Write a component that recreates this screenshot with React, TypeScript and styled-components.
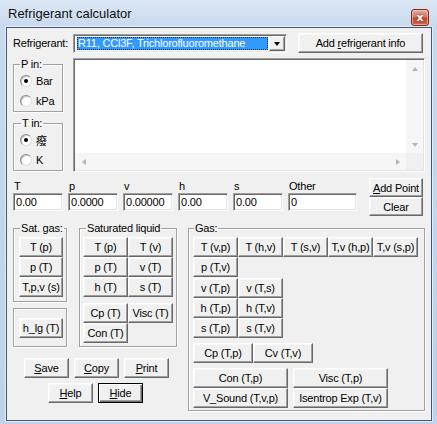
import React from 'react';
import styled, { createGlobalStyle, css } from 'styled-components';

const GlobalStyle = createGlobalStyle`
  html, body { margin: 0; padding: 0; background: #c4d5eb; }
  body { font-family: "Liberation Sans", Arial, sans-serif; }
  * { box-sizing: border-box; }
`;

const Window = styled.div`
  width: 437px;
  height: 424px;
  background: linear-gradient(180deg, #dbe7f5 0px, #c8d9ee 27px, #bfd2ea 100%);
  display: flex;
  flex-direction: column;
  font: 11px "Liberation Sans", Arial, sans-serif;
  letter-spacing: -0.2px;
  color: #000;
  overflow: hidden;
`;

const TitleBar = styled.div`
  height: 27px;
  flex: none;
  display: flex;
  align-items: flex-start;
  justify-content: space-between;
  padding: 0 8px;
`;

const Title = styled.div`
  font-size: 13px;
  letter-spacing: 0;
  line-height: 15px;
  margin-top: 6px;
  color: #111;
`;

const CloseButton = styled.div`
  margin-top: 9px;
  width: 18px;
  height: 17px;
  border-radius: 3px;
  border: 1px solid #7d2b22;
  background: linear-gradient(180deg, #e8a999 0%, #d6776a 45%, #c3462f 55%, #cf6a4f 100%);
  box-shadow: inset 0 0 0 1px rgba(255, 220, 210, 0.5);
  color: #fff;
  font: bold 11px "DejaVu Sans", sans-serif;
  display: flex;
  align-items: center;
  justify-content: center;
  text-shadow: 0 0 2px #6a1a10;
`;

const Client = styled.div`
  margin: 0 5px 0 6px;
  height: 394px;
  flex: none;
  border: 1px solid #46576d;
  box-shadow: 0 0 0 1px rgba(240, 246, 252, 0.7);
  background: #f0f0f0;
  padding: 5px 6px 0 6px;
  display: flex;
  flex-direction: column;
`;

const Row = styled.div<{ $top?: number; $height?: number; $gap?: number; $indent?: number }>`
  display: flex;
  align-items: flex-start;
  margin-top: ${p => p.$top ?? 0}px;
  ${p => p.$height !== undefined && css`height: ${p.$height}px;`}
  gap: ${p => p.$gap ?? 0}px;
  padding-left: ${p => p.$indent ?? 0}px;
`;

const Label = styled.span<{ $w?: number }>`
  width: ${p => p.$w ?? 60}px;
  line-height: 20px;
  white-space: nowrap;
`;

const Combo = styled.div`
  width: 214px;
  height: 19px;
  margin-top: 1px;
  margin-right: 11px;
  border: 1px solid;
  border-color: #a0a0a0 #fff #fff #a0a0a0;
  box-shadow: inset 1px 1px 0 #696969, inset -1px -1px 0 #e3e3e3;
  background: #fff;
  padding: 2px 2px 2px 3px;
  display: flex;
  align-items: stretch;
`;

const ComboSelection = styled.div`
  flex: 1;
  background: #3399ff;
  color: #fff;
  outline: 1px dotted #0b2a6e;
  outline-offset: -1px;
  padding-left: 1px;
  line-height: 13px;
  white-space: nowrap;
  overflow: hidden;
  margin-right: 1px;
`;

const DropButton = styled.div`
  width: 16px;
  margin: -1px -1px -1px 0;
  background: #f0f0f0;
  border: 1px solid;
  border-color: #fff #696969 #696969 #fff;
  box-shadow: inset -1px -1px 0 #a0a0a0;
  display: flex;
  align-items: center;
  justify-content: center;
`;

const TriangleDown = styled.span<{ $color?: string; $size?: number }>`
  width: 0;
  height: 0;
  border-left: ${p => p.$size ?? 3.5}px solid transparent;
  border-right: ${p => p.$size ?? 3.5}px solid transparent;
  border-top: ${p => (p.$size ?? 3.5) + 0.5}px solid ${p => p.$color ?? '#000'};
`;

const TriangleUp = styled.span<{ $color?: string }>`
  width: 0;
  height: 0;
  border-left: 3.5px solid transparent;
  border-right: 3.5px solid transparent;
  border-bottom: 4px solid ${p => p.$color ?? '#000'};
`;

const TriangleLeft = styled.span<{ $color?: string }>`
  width: 0;
  height: 0;
  border-top: 3.5px solid transparent;
  border-bottom: 3.5px solid transparent;
  border-right: 4px solid ${p => p.$color ?? '#000'};
`;

const TriangleRight = styled.span<{ $color?: string }>`
  width: 0;
  height: 0;
  border-top: 3.5px solid transparent;
  border-bottom: 3.5px solid transparent;
  border-left: 4px solid ${p => p.$color ?? '#000'};
`;

const Btn = styled.button<{ $w?: number; $h?: number; $default?: boolean }>`
  width: ${p => p.$w ?? 45}px;
  height: ${p => p.$h ?? 20}px;
  flex: none;
  margin: 0;
  padding: 0;
  font: inherit;
  letter-spacing: inherit;
  color: #000;
  background: #f0f0f0;
  border: 1px solid;
  border-color: #fff #696969 #696969 #fff;
  box-shadow: inset -1px -1px 0 #a0a0a0, inset 1px 1px 0 #f8f8f8;
  display: flex;
  align-items: center;
  justify-content: center;
  white-space: nowrap;
  ${p =>
    p.$default &&
    css`
      border: 1px solid #000;
      box-shadow: inset 1px 1px 0 #fff, inset -1px -1px 0 #696969, inset -2px -2px 0 #a0a0a0;
    `}
`;

const U = styled.span`
  text-decoration: underline;
  text-underline-offset: 1px;
`;

const Column = styled.div<{ $w?: number; $gap?: number }>`
  display: flex;
  flex-direction: column;
  ${p => p.$w !== undefined && css`width: ${p.$w}px;`}
  gap: ${p => p.$gap ?? 0}px;
  flex: none;
`;

const Group = styled.fieldset<{ $w: number; $pad: string }>`
  width: ${p => p.$w}px;
  margin: 0;
  min-width: 0;
  padding: ${p => p.$pad};
  border: 1px solid #a0a0a0;
  box-shadow: inset 1px 1px 0 #fff, 1px 1px 0 #fff;
  flex: none;
`;

const Legend = styled.legend<{ $indent?: number }>`
  margin-left: ${p => p.$indent ?? 1}px;
  padding: 0 1px;
  line-height: 13px;
  height: 13px;
  white-space: nowrap;
`;

const RadioRow = styled.div`
  height: 20px;
  display: flex;
  align-items: center;
  gap: 4px;
  padding-left: 1px;
  white-space: nowrap;
`;

const RadioCircle = styled.span<{ $checked?: boolean }>`
  width: 12px;
  height: 12px;
  border-radius: 50%;
  background: #fff;
  border: 1px solid;
  border-color: #8a8a8a #dcdcdc #dcdcdc #8a8a8a;
  box-shadow: inset 1px 1px 0 #c8c8c8;
  display: flex;
  align-items: center;
  justify-content: center;
  flex: none;
  ${p =>
    p.$checked &&
    css`
      &::after {
        content: '';
        width: 4px;
        height: 4px;
        border-radius: 50%;
        background: #000;
      }
    `}
`;

const CJK = styled.span`
  font-family: "Noto Sans CJK SC", "Noto Sans CJK TC", sans-serif;
  font-size: 11px;
`;

const ListBox = styled.div`
  width: 352px;
  height: 114px;
  border: 1px solid;
  border-color: #a0a0a0 #fff #fff #a0a0a0;
  box-shadow: inset 1px 1px 0 #696969, inset -1px -1px 0 #e3e3e3;
  padding: 1px;
  background: #fff;
  display: grid;
  grid-template-columns: 1fr 17px;
  grid-template-rows: 1fr 17px;
`;

const ListContent = styled.div`
  background: #fff;
`;

const VScroll = styled.div`
  background: #f6f6f6;
  display: flex;
  flex-direction: column;
  justify-content: space-between;
  align-items: center;
`;

const HScroll = styled.div`
  background: #f6f6f6;
  display: flex;
  justify-content: space-between;
  align-items: center;
`;

const ScrollArrow = styled.div`
  width: 17px;
  height: 17px;
  display: flex;
  align-items: center;
  justify-content: center;
`;

const ScrollCorner = styled.div`
  background: #f0f0f0;
`;

const FieldLabel = styled.div`
  height: 14px;
  line-height: 14px;
  padding-left: 1px;
  margin-top: 1px;
`;

const TextInput = styled.input<{ $w: number }>`
  width: ${p => p.$w}px;
  height: 18px;
  margin: 0;
  border: 1px solid;
  border-color: #a0a0a0 #fff #fff #a0a0a0;
  box-shadow: inset 1px 1px 0 #696969, inset -1px -1px 0 #e3e3e3;
  background: #fff;
  padding: 0 0 0 2px;
  font: inherit;
  letter-spacing: inherit;
  color: #000;
  outline: none;
`;

const ButtonGrid = styled.div<{ $cols: number; $w?: number; $colGap?: number; $top?: number }>`
  display: grid;
  grid-template-columns: repeat(${p => p.$cols}, ${p => p.$w ?? 45}px);
  grid-auto-rows: 20px;
  column-gap: ${p => p.$colGap ?? 0}px;
  margin-top: ${p => p.$top ?? 0}px;
`;

const fields: { label: string; value: string; w: number }[] = [
  { label: 'T', value: '0.00', w: 50 },
  { label: 'p', value: '0.0000', w: 50 },
  { label: 'v', value: '0.00000', w: 50 },
  { label: 'h', value: '0.00', w: 50 },
  { label: 's', value: '0.00', w: 50 },
  { label: 'Other', value: '0', w: 69 },
];

export default function App() {
  return (
    <>
      <GlobalStyle />
      <Window>
        <TitleBar>
          <Title>Refrigerant calculator</Title>
          <CloseButton>x</CloseButton>
        </TitleBar>
        <Client>
          <Row $height={20}>
            <Label>Refrigerant:</Label>
            <Combo>
              <ComboSelection>R11, CCl3F, Trichlorofluoromethane</ComboSelection>
              <DropButton>
                <TriangleDown />
              </DropButton>
            </Combo>
            <Btn $w={125}>
              Add&nbsp;<U>r</U>efrigerant info
            </Btn>
          </Row>

          <Row $top={5} $gap={10}>
            <Column $w={50} $gap={5}>
              <Group $w={50} $pad="0 0 0 5px">
                <Legend>P in:</Legend>
                <RadioRow>
                  <RadioCircle $checked />
                  <span>Bar</span>
                </RadioRow>
                <RadioRow>
                  <RadioCircle />
                  <span>kPa</span>
                </RadioRow>
              </Group>
              <Group $w={50} $pad="0 0 0 5px">
                <Legend $indent={2}>T in:</Legend>
                <RadioRow>
                  <RadioCircle $checked />
                  <CJK>癈</CJK>
                </RadioRow>
                <RadioRow>
                  <RadioCircle />
                  <span>K</span>
                </RadioRow>
              </Group>
            </Column>
            <ListBox>
              <ListContent />
              <VScroll>
                <ScrollArrow>
                  <TriangleUp $color="#b4b4b4" />
                </ScrollArrow>
                <ScrollArrow>
                  <TriangleDown $color="#b4b4b4" />
                </ScrollArrow>
              </VScroll>
              <HScroll>
                <ScrollArrow>
                  <TriangleLeft $color="#b4b4b4" />
                </ScrollArrow>
                <ScrollArrow>
                  <TriangleRight $color="#b4b4b4" />
                </ScrollArrow>
              </HScroll>
              <ScrollCorner />
            </ListBox>
          </Row>

          <Row $top={6}>
            <Row $gap={5}>
              {fields.map(f => (
                <Column key={f.label}>
                  <FieldLabel>{f.label}</FieldLabel>
                  <TextInput $w={f.w} value={f.value} readOnly />
                </Column>
              ))}
            </Row>
            <Column $w={54} style={{ marginLeft: 12 }}>
              <Btn $w={54} $h={19}>
                <U>A</U>dd Point
              </Btn>
              <Btn $w={54} $h={19}>
                Clear
              </Btn>
            </Column>
          </Row>

          <Row $top={6} $gap={11}>
            <Column $w={164}>
              <Row $gap={12}>
                <Column $w={54} $gap={6}>
                  <Group $w={54} $pad="2px 0 4px 5px">
                    <Legend>Sat. gas:</Legend>
                    <ButtonGrid $cols={1} $w={44}>
                      <Btn $w={44}>T (p)</Btn>
                      <Btn $w={44}>p (T)</Btn>
                      <Btn $w={44}>T,p,v (s)</Btn>
                    </ButtonGrid>
                  </Group>
                  <Group $w={54} $pad="9px 0 8px 5px">
                    <Btn $w={44}>h_lg (T)</Btn>
                  </Group>
                </Column>
                <Group $w={98} $pad="2px 0 3px 3px">
                  <Legend $indent={3}>Saturated liquid</Legend>
                  <ButtonGrid $cols={2}>
                    <Btn>T (p)</Btn>
                    <Btn>T (v)</Btn>
                    <Btn>p (T)</Btn>
                    <Btn>v (T)</Btn>
                    <Btn>h (T)</Btn>
                    <Btn>s (T)</Btn>
                  </ButtonGrid>
                  <ButtonGrid $cols={2} $top={6}>
                    <Btn>Cp (T)</Btn>
                    <Btn>Visc (T)</Btn>
                    <Btn>Con (T)</Btn>
                  </ButtonGrid>
                </Group>
              </Row>
              <Row $top={11} $gap={5} $indent={11}>
                <Btn>
                  <U>S</U>ave
                </Btn>
                <Btn>
                  <U>C</U>opy
                </Btn>
                <Btn>
                  <U>P</U>rint
                </Btn>
              </Row>
              <Row $top={5} $gap={5} $indent={35}>
                <Btn>
                  <U>H</U>elp
                </Btn>
                <Btn $default>
                  <U>H</U>ide
                </Btn>
              </Row>
            </Column>

            <Group $w={237} $pad="2px 0 2px 4px">
              <Legend>Gas:</Legend>
              <ButtonGrid $cols={5}>
                <Btn>T (v,p)</Btn>
                <Btn>T (h,v)</Btn>
                <Btn>T (s,v)</Btn>
                <Btn>T,v (h,p)</Btn>
                <Btn>T,v (s,p)</Btn>
                <Btn>p (T,v)</Btn>
              </ButtonGrid>
              <ButtonGrid $cols={2} $top={1}>
                <Btn>v (T,p)</Btn>
                <Btn>v (T,s)</Btn>
                <Btn>h (T,p)</Btn>
                <Btn>h (T,v)</Btn>
                <Btn>s (T,p)</Btn>
                <Btn>s (T,v)</Btn>
              </ButtonGrid>
              <ButtonGrid $cols={2} $w={60} $top={5}>
                <Btn $w={60}>Cp (T,p)</Btn>
                <Btn $w={60}>Cv (T,v)</Btn>
              </ButtonGrid>
              <ButtonGrid $cols={2} $w={95} $colGap={5} $top={5}>
                <Btn $w={95}>Con (T,p)</Btn>
                <Btn $w={95}>Visc (T,p)</Btn>
                <Btn $w={95}>V_Sound (T,v,p)</Btn>
                <Btn $w={95}>Isentrop Exp (T,v)</Btn>
              </ButtonGrid>
            </Group>
          </Row>
        </Client>
      </Window>
    </>
  );
}
